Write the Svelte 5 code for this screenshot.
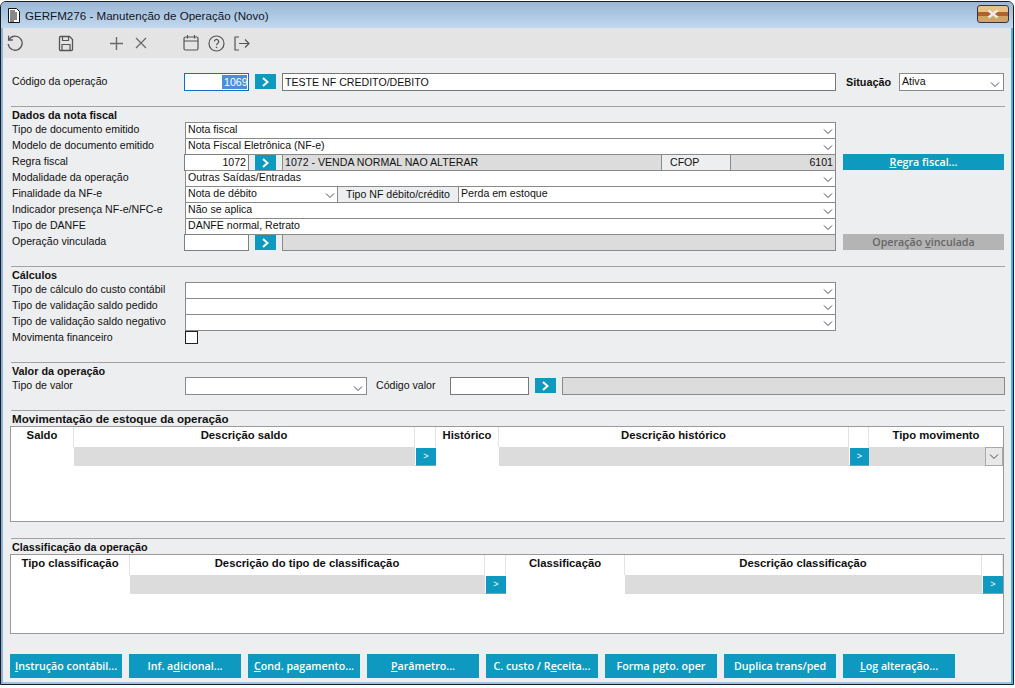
<script>
  const btns = [
    ['I','nstrução contábil...'],['Inf. a','d','icional...'],['C','ond. pagamento...'],['P','arâmetro...'],
    ['C. custo / R','e','ceita...'],['Forma pgto. oper'],['Duplica trans/ped'],['L','og alteração...']
  ];
  const rows1 = [
    {k:'sel',l:'Tipo de documento emitido',v:'Nota fiscal'},
    {k:'sel',l:'Modelo de documento emitido',v:'Nota Fiscal Eletrônica (NF-e)'},
    {k:'regra',l:'Regra fiscal'},
    {k:'sel',l:'Modalidade da operação',v:'Outras Saídas/Entradas'},
    {k:'fin',l:'Finalidade da NF-e'},
    {k:'sel',l:'Indicador presença NF-e/NFC-e',v:'Não se aplica'},
    {k:'sel',l:'Tipo de DANFE',v:'DANFE normal, Retrato'},
    {k:'vinc',l:'Operação vinculada'}
  ];
  const calc = ['Tipo de cálculo do custo contábil','Tipo de validação saldo pedido','Tipo de validação saldo negativo'];
</script>

{#snippet chev()}
  <svg class="chev" width="10" height="6" viewBox="0 0 10 6"><path d="M1 .5 5 4.500 9 .5" fill="none" stroke="#4a4a5a"/></svg>
{/snippet}
{#snippet go()}
  <span class="go"><svg width="9" height="10" viewBox="0 0 9 10"><path d="M2 1 6.500 5 2 9" fill="none" stroke="#fff" stroke-width="2"/></svg></span>
{/snippet}
{#snippet sel(v, cls = '')}
  <div class="sel {cls}"><span>{v}</span>{@render chev()}</div>
{/snippet}

<div class="win">
  <header class="title">
    <svg width="16" height="17" viewBox="0 0 16 17"><path d="M2.500 1.500h8l3 3v11h-11z" fill="#fff" stroke="#111"/><path d="M4 4h5M4 6h7M4 8h7M4 10h7M4 12h7M4 14h4" stroke="#111" stroke-width="1"/></svg>
    <span class="ttext">GERFM276 - Manutenção de Operação (Novo)</span>
    <span class="close"><svg width="14" height="10" viewBox="0 0 14 10"><path d="M2.500 1.500 11.500 8.500M11.500 1.500 2.500 8.500" stroke="#ececf0" stroke-width="2.400"/></svg></span>
  </header>
  <div class="tools">
    <svg class="t1" width="18" height="18" viewBox="0 0 18 18"><path d="M3.200 5.500A7 7 0 1 1 2.200 10" fill="none" stroke="#555" stroke-width="1.300"/><path d="M2.600 1.800v4.200h4.200" fill="none" stroke="#555" stroke-width="1.300"/></svg>
    <svg class="t2" width="16" height="17" viewBox="0 0 16 17"><path d="M1.500 2.500q0-1 1-1h9l3 3v10q0 1-1 1h-11q-1 0-1-1z" fill="none" stroke="#555" stroke-width="1.300"/><path d="M4.500 1.500v4h6v-4M4 15.500v-6h8v6" fill="none" stroke="#555" stroke-width="1.200"/></svg>
    <svg class="t3" width="13" height="13" viewBox="0 0 13 13"><path d="M6.500 0v13M0 6.500h13" stroke="#6a6a6a" stroke-width="1.400"/></svg>
    <svg class="t4" width="12" height="12" viewBox="0 0 12 12"><path d="M1 1 11 11M11 1 1 11" stroke="#666" stroke-width="1.200"/></svg>
    <svg class="t5" width="16" height="17" viewBox="0 0 16 17"><rect x="1" y="3" width="14" height="13" rx="1.500" fill="none" stroke="#555" stroke-width="1.200"/><path d="M1 7h14M4.500 1v3.500M11.500 1v3.500" stroke="#555" stroke-width="1.200" fill="none"/></svg>
    <svg class="t6" width="17" height="17" viewBox="0 0 17 17"><circle cx="8.500" cy="8.500" r="7.500" fill="none" stroke="#555" stroke-width="1.200"/><path d="M6.300 6.500a2.200 2.200 0 1 1 3.300 2c-.8.500-1.100.9-1.100 1.800" fill="none" stroke="#555" stroke-width="1.200"/><circle cx="8.500" cy="12.500" r=".8" fill="#555"/></svg>
    <svg class="t7" width="16" height="15" viewBox="0 0 16 15"><path d="M5 1H1v13h4M5 7.500h10M11 3.500l4 4-4 4" fill="none" stroke="#555" stroke-width="1.200"/></svg>
  </div>

  <main class="form">
    <div class="code-row">
      <label class="lab" for="code">Código da operação</label>
      <div class="focus" id="code"><span class="hl">1069</span></div>
      {@render go()}
      <div class="txt wide">TESTE NF CREDITO/DEBITO</div>
      <b class="sit">Situação</b>
      <div class="sitbox">{@render sel('Ativa', 'sit-sel')}</div>
    </div>
    <hr class="h1" />

    <h3>Dados da nota fiscal</h3>
    {#each rows1 as r}
      <div class="row">
        <span class="lab">{r.l}</span>
        {#if r.k === 'sel'}
          <div class="fields">{@render sel(r.v, 'grow')}</div>
        {:else if r.k === 'regra'}
          <div class="fields">
            <div class="num">1072</div>
            {@render go()}
            <div class="ro g1">1072 - VENDA NORMAL NAO ALTERAR</div>
            <div class="cfop">CFOP</div>
            <div class="ro g2">6101</div>
          </div>
          <span class="blue side">
            <span><u>R</u>egra fiscal...</span>
          </span>
        {:else if r.k === 'fin'}
          <div class="fields">
            {@render sel('Nota de débito', 'f1')}
            <div class="tnf">Tipo NF débito/crédito</div>
            {@render sel('Perda em estoque', 'f2')}
          </div>
        {:else}
          <div class="fields">
            <div class="num"></div>
            {@render go()}
            <div class="ro g3"></div>
          </div>
          <span class="blue side off"><span>Operação <u>v</u>inculada</span></span>
        {/if}
      </div>
    {/each}
    <hr class="h2" />

    <h3>Cálculos</h3>
    {#each calc as c}
      <div class="row"><span class="lab">{c}</span><div class="fields">{@render sel('', 'grow')}</div></div>
    {/each}
    <div class="row"><span class="lab">Movimenta financeiro</span><span class="check"></span></div>
    <hr class="h2" />

    <h3 class="h-tight">Valor da operação</h3>
    <div class="valor">
      <span class="lab lab-v">Tipo de valor</span>
      {@render sel('', 'v1')}
      <span class="cv">Código valor</span>
      <div class="txt v2"></div>
      {@render go()}
      <div class="ro v3"></div>
    </div>
    <hr class="h1" />

    <h3 class="big">Movimentação de estoque da operação</h3>
    <div class="table t-a">
      <b>Saldo</b><b>Descrição saldo</b><b class="e"></b><b>Histórico</b><b>Descrição histórico</b><b class="e"></b><b>Tipo movimento</b>
      <i class="w"></i><i></i><span class="mini">&gt;</span><i class="w"></i><i></i><span class="mini">&gt;</span>
      <i class="tm"><span class="dd">{@render chev()}</span></i>
    </div>
    <hr class="h2" />

    <h3>Classificação da operação</h3>
    <div class="table t-b">
      <b>Tipo classificação</b><b>Descrição do tipo de classificação</b><b class="e"></b><b>Classificação</b><b>Descrição classificação</b><b class="e"></b>
      <i class="w"></i><i></i><span class="mini">&gt;</span><i class="w"></i><i></i><span class="mini">&gt;</span>
    </div>

    <div class="bar">
      {#each btns as b}
        <span class="blue act">
          <span>
            {#if b.length === 1}{b[0]}
            {:else if b.length === 2}<u>{b[0]}</u>{b[1]}
            {:else}{b[0]}<u>{b[1]}</u>{b[2]}{/if}
          </span>
        </span>
      {/each}
    </div>
  </main>
</div>

<style>
  :global(body) { margin: 0; background: #fff; }
  * { box-sizing: border-box; }
  .win {
    width: 1014px; height: 684px; margin-top: 1px; display: flex; flex-direction: column;
    border: 1px solid #1c1c1c; border-radius: 6px 6px 0 0; overflow: hidden;
    background: #edeef0; font: 10.6px "Liberation Sans", Arial, sans-serif; color: #111;
    box-shadow: inset 2px 0 #8db4dc, inset -2px 0 #3fb4e6, inset 0 -2px #9cc4e8;
  }
  .title {
    height: 26px; flex: none; display: flex; align-items: center; padding-left: 5px;
    background: linear-gradient(#9ab7d5, #c1d9ef);
  }
  .ttext { margin: 1px 0 0 3px; font: 11.6px "Liberation Sans", Arial, sans-serif; color: #14141e; }
  .close {
    margin-left: auto; margin-right: 4px; margin-top: -3px; width: 32px; height: 18px; display: flex;
    align-items: center; justify-content: center; border: 1px solid #3c3040; border-radius: 3px;
    background: linear-gradient(#e6c283 0 40%, #b2602e 40% 60%, #cfa46a 60%);
  }
  .tools { height: 30px; flex: none; position: relative; margin: 0 2px 0 2px; background: #e4e4e4; }
  .tools svg { position: absolute; }
  .t1 { left: 3px; top: 6px; } .t2 { left: 55px; top: 7px; } .t3 { left: 107px; top: 9px; }
  .t4 { left: 132px; top: 9px; } .t5 { left: 180px; top: 6px; } .t6 { left: 205px; top: 7px; } .t7 { left: 231px; top: 8px; }

  .form { padding: 15px 9px 0 9px; flex: 1; display: flex; flex-direction: column; }
  .code-row { display: flex; height: 18px; align-items: stretch; }
  .lab { width: 174px; padding-left: 2px; flex: none; line-height: 14px; white-space: nowrap; }
  .code-row .lab { line-height: 16px; }
  .focus { width: 65px; flex: none; border: 1px solid #1a6cc0; background: #fff; display: flex; justify-content: flex-end; padding: 1px; }
  .hl { background: #4a90d9; color: #fff; line-height: 14px; padding: 0 0 0 2px; width: 25px; }
  .go {
    flex: none; width: 21px; height: 15px; margin: 1px 6px 0 6px; background: #0e9ac0;
    display: flex; align-items: center; justify-content: center;
  }
  .txt { background: #fff; border: 1px solid #777; padding: 0 2px; line-height: 16px; }
  .wide { width: 554px; flex: none; }
  .sit { margin: 2px 0 0 10px; width: 53px; flex: none; line-height: 14px; font-size: 10.8px; }
  .sel {
    position: relative; background: #fff; border: 1px solid #8a8a8a;
    padding: 0 2px; line-height: 13px; white-space: nowrap; min-width: 0;
  }
  .sel span { display: block; }
  .chev { position: absolute; right: 2px; top: 6px; }
  .sitbox { width: 105px; flex: none; display: flex; }
  .sitbox .sel { width: 100%; line-height: 15px; }
  .sitbox .chev { top: 8px; right: 3px; }
  hr { border: 0; height: 1px; background: #a2a2a2; margin: 0 0 0 1px; width: 994px; flex: none; }
  .h1 { margin-top: 15px; }
  .h2 { margin-top: 16px; }
  h3 { margin: 0; height: 15px; padding-left: 2px; font: bold 10.8px/17px "Liberation Sans", Arial, sans-serif; flex: none; }
  .h-tight { height: 14px; line-height: 16px; }
  .big { font-size: 11.6px; line-height: 16px; }
  .row { height: 16px; display: flex; flex: none; position: relative; }
  .fields { width: 652px; flex: none; display: flex; }
  :global(.grow) { flex: 1; margin-left: 1px; }
  .fields > :global(.sel) { height: 17px; }
  .num { width: 65px; flex: none; height: 17px; background: #fff; border: 1px solid #808080; text-align: right; padding: 0 2px; line-height: 15px; }
  .ro { background: #dcdcdc; border: 1px solid #8a8a8a; height: 17px; line-height: 15px; padding: 0 2px; }
  .g1 { width: 380px; flex: none; }
  .g3 { flex: 1; }
  .cfop { width: 68px; flex: none; line-height: 15px; padding-left: 8px; height: 17px; border-top: 1px solid #8a8a8a; border-bottom: 1px solid #8a8a8a; }
  .g2 { flex: 1; text-align: right; }
  .side { margin-left: 7px; width: 161px; height: 16px; }
  .blue { background: #0e9ac0; color: #fff; display: flex; align-items: center; justify-content: center; font: 600 10.7px "Open Sans", sans-serif; white-space: nowrap; }
  .off { background: #b4b4b4; color: #666; }
  :global(.f1) { width: 153px; flex: none; margin-left: 1px; }
  :global(.f2) { flex: 1; }
  .tnf { width: 120px; flex: none; height: 17px; border-top: 1px solid #8a8a8a; border-bottom: 1px solid #8a8a8a; text-align: center; line-height: 15px; }
  .check { width: 13px; height: 13px; background: #fff; border: 1px solid #222; margin: 1px 0 0 1px; }

  .valor { display: flex; height: 18px; flex: none; }
  .lab-v { line-height: 16px; }
  :global(.v1) { width: 182px; flex: none; margin-left: 1px; }
  :global(.v1) .chev { top: 8px; right: 3px; }
  .cv { margin-left: 9px; width: 74px; flex: none; line-height: 17px; }
  .v2 { width: 79px; flex: none; }
  .v3 { width: 443px; flex: none; height: 18px; }

  .table {
    width: 994px; flex: none; background: #fff; border: 1px solid #9a9a9a; display: grid;
    grid-template-rows: 20px 19px; align-content: start;
  }
  .t-a { height: 96px; grid-template-columns: 63px 341px 21px 63px 350px 20px 134px; }
  .t-b { height: 80px; grid-template-columns: 119px 355px 21px 119px 357px 21px; }
  .table b { text-align: center; line-height: 17px; border-right: 1px solid #e4e4e4; white-space: nowrap; font-size: 11.3px; }
  .table b:last-of-type { border-right: 0; }
  .table b.e { border-right: 1px solid #e4e4e4; }
  .table i { background: #dcdcdc; display: block; position: relative; }
  .table i.w { background: #fff; }
  .mini {
    background: #0e9ac0; color: #fff; font-size: 9px; line-height: 17px; text-align: center;
    border-bottom: 1px solid #8a9aa0; border-left: 1px solid #fff; margin-top: 1px;
  }
  .dd { position: absolute; right: 0; top: 0; width: 18px; height: 19px; background: #e8e8e8; border: 1px solid #a8aca4; }
  .dd .chev { right: 3px; top: 6px; }
  .bar { display: flex; gap: 7px; margin-top: 20px; }
  .act { width: 112px; height: 24px; }
</style>
